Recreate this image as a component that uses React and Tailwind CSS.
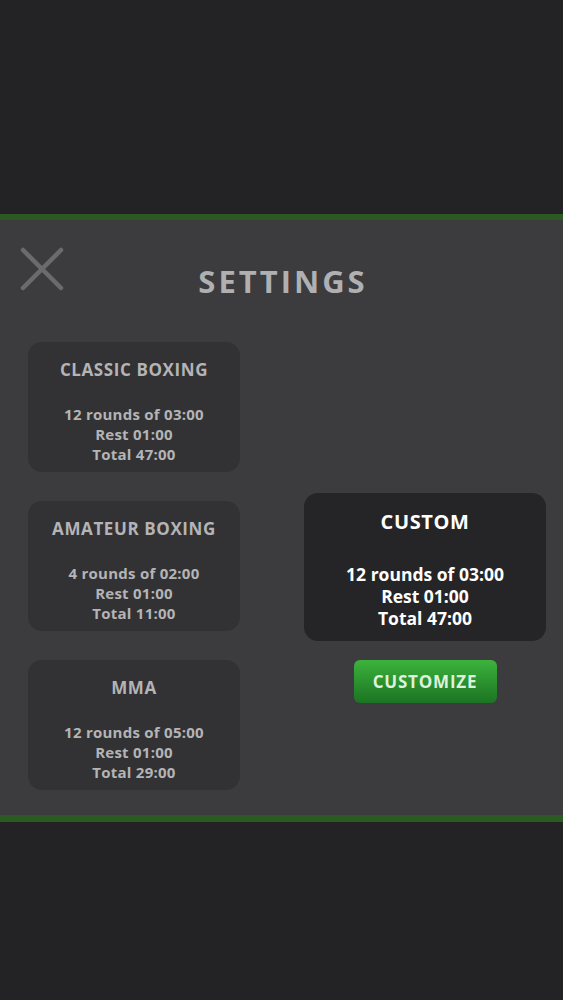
const presets = [
  { name: 'CLASSIC BOXING', rounds: 12, round: '03:00', rest: '01:00', total: '47:00' },
  { name: 'AMATEUR BOXING', rounds: 4, round: '02:00', rest: '01:00', total: '11:00' },
  { name: 'MMA', rounds: 12, round: '05:00', rest: '01:00', total: '29:00' },
]

function PresetCard({ preset }) {
  return (
    <div className="h-[130px] w-[212px] rounded-[14px] bg-[#323234] pt-[17px] text-center text-[#b4b4b6]">
      <p className="text-[17px] font-bold leading-[21px] tracking-[0.6px]">{preset.name}</p>
      <div className="mt-[24px] text-[15px] font-bold leading-[20px] tracking-[0.25px]">
        <p>{preset.rounds} rounds of {preset.round}</p>
        <p>Rest {preset.rest}</p>
        <p>Total {preset.total}</p>
      </div>
    </div>
  )
}

function CloseIcon() {
  return (
    <svg width="44" height="44" viewBox="0 0 44 44" fill="none">
      <path d="M3 3 L41 41 M41 3 L3 41" stroke="#6b6b6d" strokeWidth="4.5" strokeLinecap="round" />
    </svg>
  )
}

export default function App() {
  return (
    <div className="flex h-[1000px] w-full flex-col bg-[#232224] font-['Open_Sans','Liberation_Sans',sans-serif]">
      <div className="h-[214px]" />
      <div className="h-[6px] bg-[#2b5a22]" />
      <div className="relative h-[595px] bg-[#3c3c3e]">
        {/* Header */}
        <div className="relative h-[122px]">
          <button className="absolute left-[20px] top-[27px]" aria-label="Close">
            <CloseIcon />
          </button>
          <h1 className="pt-[41px] pl-[3px] text-center text-[31px] font-bold leading-[40px] tracking-[3px] text-[#b0b0b2]">
            SETTINGS
          </h1>
        </div>

        {/* Content */}
        <div className="flex pl-[28px]">
          <div className="flex flex-col gap-[29px]">
            {presets.map((p) => (
              <PresetCard key={p.name} preset={p} />
            ))}
          </div>
          <div className="ml-[64px] mt-[151px] flex flex-col items-center">
            <div className="h-[148px] w-[242px] rounded-[14px] bg-[#252527] pt-[17px] text-center text-white">
              <p className="text-[20px] font-bold leading-[24px] tracking-[0.6px]">CUSTOM</p>
              <div className="mt-[29px] text-[17.5px] font-bold leading-[22px]">
                <p>12 rounds of 03:00</p>
                <p>Rest 01:00</p>
                <p>Total 47:00</p>
              </div>
            </div>
            <button className="mt-[19px] h-[43px] w-[143px] rounded-[6px] bg-gradient-to-b from-[#3cb33c] to-[#1b7423] text-[17px] font-bold tracking-[0.8px] text-[#dcf2dc]">
              CUSTOMIZE
            </button>
          </div>
        </div>
      </div>
      <div className="h-[7px] bg-[#2b5a22]" />
      <div className="flex-1" />
    </div>
  )
}
